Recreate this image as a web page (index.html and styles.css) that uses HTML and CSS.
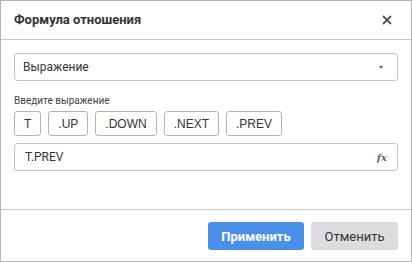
FILE: index.html
```html
<!DOCTYPE html>
<html lang="ru">
<head>
    <meta charset="UTF-8">
    <title>Формула отношения</title>
    <link rel="stylesheet" href="styles.css">
</head>
<body>

<div class="dialog">
    <div class="dialog-header">
        <span class="dialog-title">Формула отношения</span>
        <span class="dialog-close">
            <svg width="10" height="10" viewBox="0 0 10 10"><path d="M1 1L9 9M9 1L1 9" stroke="#555" stroke-width="1.8"/></svg>
        </span>
    </div>

    <div class="dialog-body">
        <div class="select">
            <span>Выражение</span>
            <span class="caret"></span>
        </div>

        <div class="field-label">Введите выражение</div>
        <div class="tokens">
            <button class="token">T</button>
            <button class="token">.UP</button>
            <button class="token">.DOWN</button>
            <button class="token">.NEXT</button>
            <button class="token">.PREV</button>
        </div>

        <div class="formula">
            <span>T.PREV</span>
            <span class="fx">fx</span>
        </div>
    </div>

    <div class="dialog-footer">
        <button class="btn btn-primary">Применить</button>
        <button class="btn btn-secondary">Отменить</button>
    </div>
</div>

</body>
</html>
```

FILE: styles.css
```css
body {
    margin: 0;
    font-family: Roboto, "Noto Sans", sans-serif;
    background: #fff;
}

.dialog {
    width: 412px;
    height: 262px;
    border: 1px solid #b4b4b4;
    box-sizing: border-box;
    display: flex;
    flex-direction: column;
    background: #fff;
}

.dialog-header {
    height: 38px;
    border-bottom: 1px solid #c8c8c8;
    display: flex;
    align-items: center;
    justify-content: space-between;
    padding: 0 19px 0 13px;
}

.dialog-title {
    font-size: 13px;
    font-weight: bold;
    color: #333;
    padding-bottom: 1px;
}

.dialog-close {
    display: flex;
}

.dialog-body {
    flex: 1;
    padding: 13px 13px 0;
}

.select {
    height: 28px;
    box-sizing: border-box;
    border: 1px solid #c4c4c4;
    border-radius: 3px;
    display: flex;
    align-items: center;
    justify-content: space-between;
    padding: 0 14px 0 8px;
    font-size: 12px;
    color: #333;
}

.caret {
    width: 0;
    height: 0;
    border-left: 2.5px solid transparent;
    border-right: 2.5px solid transparent;
    border-top: 3px solid #666;
}

.field-label {
    font-size: 10px;
    color: #444;
    margin-top: 14px;
}

.tokens {
    display: flex;
    gap: 7px;
    margin-top: 5px;
}

.token {
    height: 25px;
    padding: 0 9px;
    border: 1px solid #b4b4b4;
    border-radius: 3px;
    background: #fff;
    font-family: "Liberation Sans", Arial, sans-serif;
    font-size: 12px;
    color: #333;
}

.formula {
    margin-top: 7px;
    height: 28px;
    box-sizing: border-box;
    border: 1px solid #c4c4c4;
    border-radius: 3px;
    display: flex;
    align-items: center;
    justify-content: space-between;
    padding: 0 10px 0 10px;
    font-size: 12px;
    color: #333;
}

.fx {
    font-family: "DejaVu Serif", serif;
    font-style: italic;
    font-weight: bold;
    font-size: 10px;
    color: #666;
}

.dialog-footer {
    height: 52px;
    border-top: 1px solid #c8c8c8;
    display: flex;
    justify-content: flex-end;
    align-items: flex-start;
    gap: 7px;
    padding: 12px 13px 0;
    box-sizing: border-box;
}

.btn {
    height: 28px;
    border: none;
    border-radius: 3px;
    font-family: Roboto, sans-serif;
    font-size: 13px;
}

.btn-primary {
    width: 96px;
    background: #4a90e8;
    color: #fff;
    font-weight: bold;
}

.btn-secondary {
    width: 87px;
    background: #dcdcdf;
    color: #333;
}
```
